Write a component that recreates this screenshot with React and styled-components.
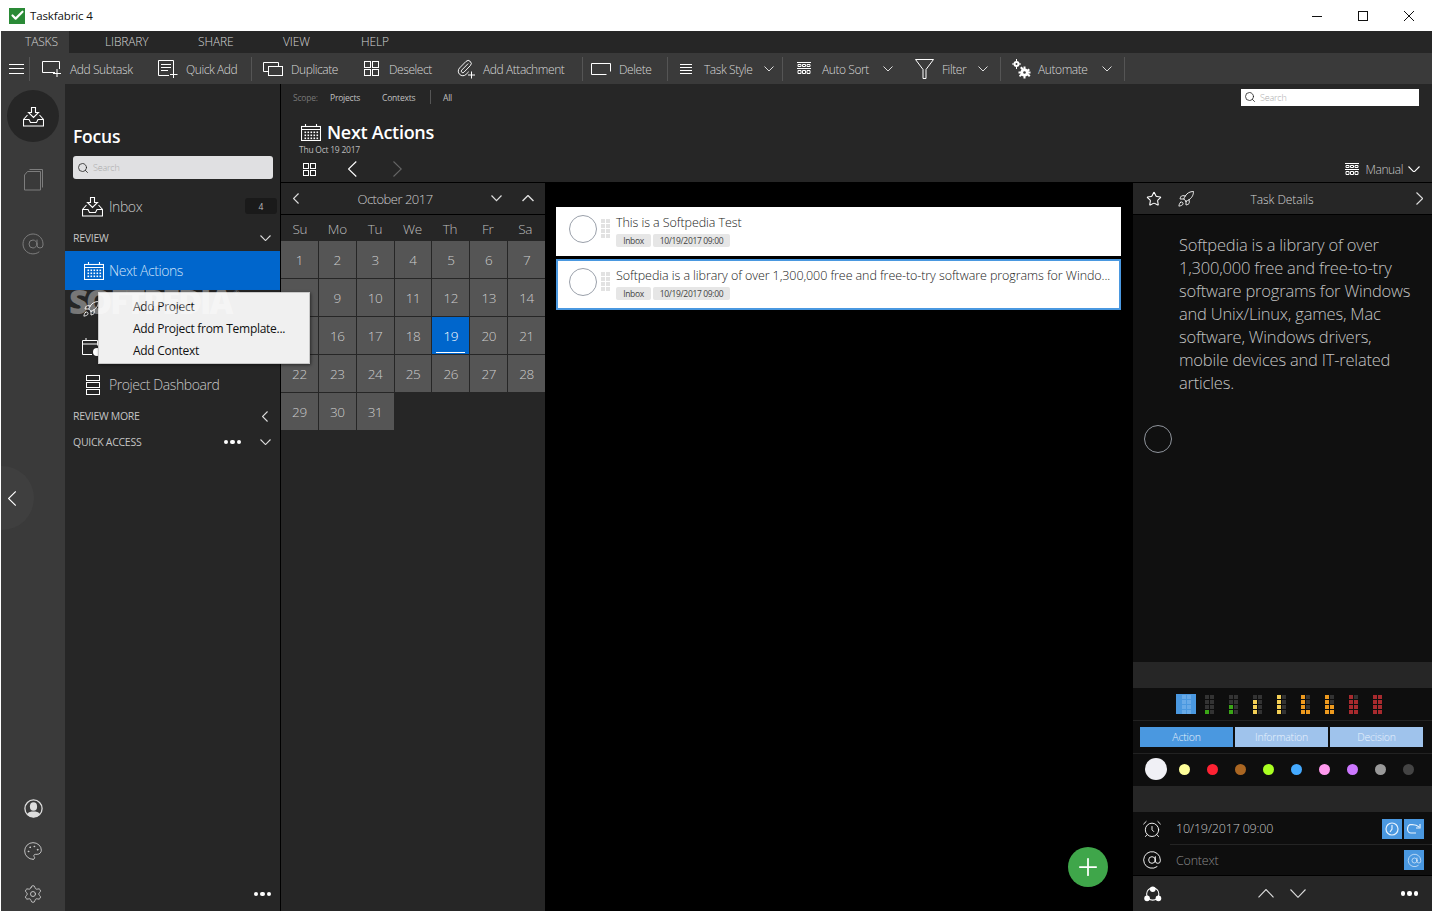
import React from 'react';
import styled, { createGlobalStyle } from 'styled-components';
import { Rocket, Star, Settings, Palette, AtSign, AlarmClock, Search as SearchIcon, Check, Plus } from 'lucide-react';

const Global = createGlobalStyle`
  html, body { margin: 0; padding: 0; background: #fff; overflow: hidden; }
  * { box-sizing: border-box; }
  body { font-family: "Open Sans", "Liberation Sans", sans-serif; }
`;

const Shell = styled.div`
  width: 1433px; height: 912px; display: flex; flex-direction: column; background: #fff; position: relative;
`;
const TitleBar = styled.div`
  height: 31px; display: flex; align-items: center; padding-left: 9px; flex: none;
`;
const Logo = styled.div`
  width: 16px; height: 16px; background: #2a8a36; display: flex; align-items: center; justify-content: center; color: #fff;
`;
const AppName = styled.span`
  margin-left: 5px; font-size: 11.5px; color: #111; letter-spacing: -0.12px;
`;
const WinButtons = styled.div`
  margin-left: auto; display: flex; margin-right: 1px;
`;
const WinButton = styled.div`
  width: 46px; height: 31px; display: flex; align-items: center; justify-content: center; color: #111;
`;
const Frame = styled.div`
  flex: 1; display: flex; flex-direction: column; margin: 0 1px 1px; min-height: 0; position: relative; background: #262626;
`;
const Tabs = styled.div`
  height: 22px; display: flex; flex: none; background: #262626;
`;
const Tab = styled.div`
  width: ${p => p.$w}px; padding-left: ${p => p.$pad}px; padding-bottom: 1px; display: flex; align-items: center;
  font-size: 12px; font-weight: 300; color: #d4d4d4; letter-spacing: -0.15px;
  background: ${p => (p.$on ? '#3a3a3a' : 'transparent')};
`;
const Toolbar = styled.div`
  height: 31px; display: flex; align-items: center; background: #3a3a3a; flex: none;
`;
const Hamburger = styled.div`
  margin-left: 8px; width: 15px; height: 10px; margin-right: 5px;
  border-top: 1px solid #fff; border-bottom: 1px solid #fff; position: relative;
  &::after { content: ''; position: absolute; left: 0; right: 0; top: 3.5px; height: 1px; background: #fff; }
`;
const ToolSep = styled.div`
  width: 1px; height: 24px; background: #555; margin-right: ${p => p.$after}px; flex: none;
`;
const ToolItem = styled.div`
  width: ${p => p.$w}px; display: flex; align-items: center; flex: none; height: 100%;
`;
const ToolIcon = styled.div`
  width: ${p => p.$w}px; display: flex; align-items: center; color: #fff; flex: none;
`;
const ToolLabel = styled.span`
  font-size: 12px; font-weight: 300; color: #d8d8d8; letter-spacing: -0.42px; white-space: nowrap; padding-top: 1px;
`;
const ToolChev = styled.div`
  margin-left: auto; margin-right: ${p => p.$r}px; display: flex; color: #ddd;
`;
const Work = styled.div`
  flex: 1; display: flex; min-height: 0; position: relative;
`;
const Rail = styled.div`
  width: 64px; flex: none; background: #3a3a3a; display: flex; flex-direction: column; position: relative;
`;
const RailSlot = styled.div`
  height: 64px; display: flex; align-items: center; justify-content: center; color: #7d7d7d;
`;
const RailActive = styled.div`
  width: 52px; height: 52px; border-radius: 50%; background: #262626; color: #fff;
  display: flex; align-items: center; justify-content: center;
`;
const RailBottom = styled.div`
  margin-top: auto; display: flex; flex-direction: column; gap: 9px;
`;
const RailFoot = styled.div`
  height: 34px; display: flex; align-items: center; justify-content: center; color: ${p => p.$c};
`;
const Collapse = styled.div`
  position: absolute; left: 0; top: 382px; width: 33px; height: 64px; background: #3f3f3f;
  border-radius: 0 33px 33px 0; display: flex; align-items: center; padding-left: 7px; color: #fff;
`;
const Sidebar = styled.div`
  width: 216px; flex: none; background: #262626; border-right: 1px solid #000;
  display: flex; flex-direction: column; padding-top: 40px;
`;
const FocusTitle = styled.div`
  height: 24px; line-height: 24px; padding-left: 8px; font-size: 17.5px; font-weight: 600; color: #fff; letter-spacing: -0.2px;
`;
const FocusSearch = styled.div`
  margin: 8px 7px 0 8px; height: 23px; background: #e0e0e2; border-radius: 3px;
  display: flex; align-items: center; padding-left: 4px; color: #222;
`;
const SearchHint = styled.span`
  margin-left: ${p => p.$gap}px; font-size: 9px; font-weight: 300; color: #aaa; letter-spacing: -0.2px;
`;
const NavRow = styled.div`
  height: ${p => p.$h}px; display: flex; align-items: center; padding-left: 17px; color: #fff;
  margin-top: ${p => p.$mt || 0}px;
  background: ${p => (p.$on ? '#0066cc' : 'transparent')};
`;
const NavIcon = styled.div`
  width: 27px; display: flex; align-items: center; flex: none; color: #fff; padding-left: ${p => p.$pl || 0}px;
`;
const NavLabel = styled.span`
  font-size: 14px; font-weight: 300; color: ${p => (p.$on ? '#cfe2f8' : '#c8c8c8')}; letter-spacing: -0.42px;
`;
const Badge = styled.div`
  margin-left: auto; margin-right: 3px; width: 32px; height: 16px; background: #1a1a1a; border-radius: 3px;
  font-size: 8.5px; color: #bbb; display: flex; align-items: center; justify-content: center;
`;
const Section = styled.div`
  height: ${p => p.$h}px; display: flex; align-items: center; padding-left: 8px; padding-right: 9px; color: #ddd;
`;
const SectionLabel = styled.span`
  font-size: 10.5px; font-weight: 400; color: #c4c4c4; letter-spacing: -0.28px; margin-right: auto;
`;
const Dots = styled.div`
  display: flex; gap: 2px; margin-right: ${p => p.$r || 0}px;
  & > i { width: 4.5px; height: 4.5px; border-radius: 50%; background: #fff; display: block; }
`;
const LeftChev = styled.div`
  display: flex; margin-right: 3px;
`;
const SideFoot = styled.div`
  margin-top: auto; height: 34px; display: flex; align-items: center; justify-content: flex-end; padding-right: 9px;
`;
const Main = styled.div`
  flex: 1; display: flex; flex-direction: column; min-width: 0;
`;
const Header = styled.div`
  height: 99px; flex: none; background: #262626; border-bottom: 1px solid #000; display: flex; flex-direction: column;
`;
const ScopeRow = styled.div`
  height: 26px; display: flex; align-items: center; padding-left: 12px; padding-right: 13px;
`;
const ScopeItem = styled.span`
  width: ${p => p.$w}px; font-size: 8.5px; letter-spacing: -0.2px; color: ${p => p.$c}; font-weight: 400; flex: none;
`;
const ScopeSep = styled.div`
  width: 1px; height: 14px; background: #555; margin-right: 12px;
`;
const TopSearch = styled.div`
  margin-left: auto; width: 178px; height: 17px; background: #fff; display: flex; align-items: center; padding-left: 3px; color: #222;
`;
const TitleRow = styled.div`
  margin-top: 11px; height: 22px; display: flex; align-items: center; padding-left: 20px; color: #fff;
`;
const PageTitle = styled.h1`
  margin: 0 0 0 6px; font-size: 18px; font-weight: 600; color: #fff; letter-spacing: -0.28px;
`;
const DateLine = styled.div`
  margin-top: 1px; height: 12px; line-height: 12px; padding-left: 18px; font-size: 8.5px; color: #bbb; letter-spacing: -0.25px;
`;
const NavBar = styled.div`
  height: 26px; display: flex; align-items: center; padding-left: 22px; padding-right: 12px; color: #fff;
`;
const NavChev = styled.div`
  margin-left: ${p => p.$ml}px; display: flex; color: ${p => p.$c};
`;
const Manual = styled.div`
  margin-left: auto; display: flex; align-items: center; color: #fff;
`;
const ManualText = styled.span`
  margin: 0 5px 0 7px; font-size: 12px; font-weight: 300; color: #c8c8c8; letter-spacing: -0.42px;
`;
const Content = styled.div`
  flex: 1; display: flex; min-height: 0;
`;
const Calendar = styled.div`
  width: 264px; flex: none; background: #262626; display: flex; flex-direction: column;
`;
const MonthBar = styled.div`
  height: 32px; flex: none; border-bottom: 1px solid #000; display: flex; align-items: center; padding-left: 12px; color: #ddd;
`;
const MonthLabel = styled.div`
  width: 180px; margin-left: 6px; text-align: center; font-size: 13px; font-weight: 300; color: #ccc; letter-spacing: -0.5px;
`;
const MonthChev = styled.div`
  margin-left: ${p => p.$ml}px; display: flex; color: #ddd;
`;
const WeekRow = styled.div`
  height: 26px; flex: none; display: grid; grid-template-columns: repeat(7, 1fr); padding: 1px 1px 0 0;
`;
const WeekDay = styled.div`
  display: flex; align-items: center; justify-content: center; font-size: 13.5px; font-weight: 300; color: #bdbdbd; letter-spacing: -0.3px;
`;
const DayGrid = styled.div`
  display: grid; grid-template-columns: repeat(7, 1fr); grid-auto-rows: 37px; gap: 1px;
`;
const Day = styled.div`
  position: relative; display: flex; align-items: center; justify-content: center;
  background: ${p => (p.$on ? '#0066cc' : '#555')}; font-size: 13.5px; font-weight: 300; color: ${p => (p.$on ? '#fff' : '#ccc')}; letter-spacing: -0.4px;
  ${p => p.$on && `&::after { content: ''; position: absolute; left: 4px; right: 4px; bottom: 1px; height: 1px; background: #fff; }`}
`;
const List = styled.div`
  flex: 1; background: #000; padding: 24px 12px 0 11px; display: flex; flex-direction: column; gap: 3px; position: relative; min-width: 0;
`;
const Card = styled.div`
  height: ${p => (p.$sel ? 51 : 49)}px; background: #fff; border: 2px solid ${p => (p.$sel ? '#4a98e0' : '#fff')};
  padding: ${p => (p.$sel ? 7 : 6)}px 6px 0 11px; display: flex; align-items: flex-start;
`;
const Check2 = styled.div`
  width: 28px; height: 28px; border-radius: 50%; border: 1px solid #9aa0aa; flex: none;
`;
const Grip = styled.div`
  display: grid; grid-template-columns: 4px 4px; grid-auto-rows: 4px; gap: 1px; margin: 4px 6px 0 4px; flex: none;
  & > i { background: #e2e2e2; display: block; }
`;
const CardBody = styled.div`
  min-width: 0; flex: 1;
`;
const CardTitle = styled.div`
  height: 16px; line-height: 16px; font-size: 12.5px; font-weight: 300; color: #222; white-space: nowrap; letter-spacing: -0.08px;
`;
const TagRow = styled.div`
  margin-top: 3px; display: flex; gap: 2px;
`;
const Tag = styled.span`
  width: ${p => p.$w}px; height: 13px; line-height: 13px; background: #e6e6e6; border-radius: 2px; text-align: center;
  font-size: 8.5px; color: #444; letter-spacing: -0.35px;
`;
const Fab = styled.div`
  position: absolute; left: 523px; top: 664px; width: 40px; height: 40px; border-radius: 50%; background: #3fa64a;
  display: flex; align-items: center; justify-content: center; color: #fff;
`;
const Detail = styled.div`
  width: 299px; flex: none; display: flex; flex-direction: column; background: #0e0e0e;
`;
const DetailHead = styled.div`
  height: 32px; flex: none; background: #262626; border-bottom: 1px solid #000; display: flex; align-items: center;
  padding: 0 8px 0 13px; color: #fff;
`;
const DetailTitle = styled.div`
  width: 140px; margin-left: 17px; text-align: center; font-size: 12px; font-weight: 300; color: #d4d4d4; letter-spacing: -0.05px; padding-top: 1px;
`;
const DetailBody = styled.div`
  height: 447px; flex: none; background: #101010; padding: 18px 10px 0 11px;
`;
const Note = styled.p`
  margin: 0 0 0 35px; width: 240px; font-size: 16.5px; line-height: 23px; font-weight: 300; color: #c4c4c4; letter-spacing: -0.2px;
`;
const BigCircle = styled.div`
  margin-top: 31px; width: 28px; height: 28px; border-radius: 50%; border: 1px solid #8f949c;
`;
const Band = styled.div`
  height: 26px; flex: none; background: #262626;
`;
const Strip = styled.div`
  height: 32px; flex: none; display: flex; align-items: center; padding-left: ${p => p.$pl}px; padding-bottom: ${p => p.$pb || 0}px; gap: ${p => p.$gap || 0}px;
  border-bottom: ${p => (p.$line ? '1px solid #222' : 'none')}; box-sizing: ${p => (p.$line ? 'content-box' : 'border-box')};
`;
const PriorityOn = styled.div`
  width: 20px; height: 20px; background: #4a98e0; display: grid; grid-template-columns: 4px 4px; grid-auto-rows: 4px; gap: 1px;
  justify-content: center; align-content: center; margin-right: -6px;
  & > i { background: #68aae8; display: block; }
`;
const Priority = styled.div`
  display: grid; grid-template-columns: 4px 4px; grid-auto-rows: 4px; gap: 1px;
`;
const Pip = styled.i`
  display: block; background: ${p => p.$c};
`;
const TypeButton = styled.div`
  width: 93px; height: 20px; background: ${p => (p.$on ? '#4a98e0' : '#9fc3ec')}; display: flex; align-items: center; justify-content: center;
  font-size: 10.5px; font-weight: 300; color: #e8f2fc; letter-spacing: -0.2px;
`;
const DotSlot = styled.div`
  width: 28px; display: flex; justify-content: center; flex: none;
`;
const ColorDot = styled.div`
  width: ${p => (p.$big ? 22 : 11)}px; height: ${p => (p.$big ? 22 : 11)}px; border-radius: 50%; background: ${p => p.$c};
`;
const MetaRow = styled.div`
  height: ${p => p.$h}px; flex: none; position: relative; display: flex; align-items: center; padding: 0 8px 0 9px; color: #fff;
  ${p => p.$line && `&::after { content: ''; position: absolute; left: 37px; right: 0; bottom: 0; height: 1px; background: #242424; }`}
`;
const MetaIcon = styled.div`
  width: 20px; display: flex; justify-content: center; flex: none;
`;
const MetaText = styled.span`
  margin-left: 14px; margin-right: auto; font-size: 12.5px; font-weight: 300; color: ${p => p.$c}; letter-spacing: -0.2px; padding-top: ${p => p.$pt || 0}px;
`;
const MetaButton = styled.div`
  width: 20px; height: 20px; background: #4a98e0; margin-left: 2px; display: flex; align-items: center; justify-content: center; color: #e6f1fc;
`;
const DetailFoot = styled.div`
  flex: 1; background: #262626; border-top: 1px solid #000; display: flex; align-items: center; padding: 0 14px 0 11px; color: #fff;
`;
const FootChev = styled.div`
  margin-left: ${p => p.$ml}px; display: flex; color: #ddd;
`;
const Popup = styled.div`
  position: absolute; left: 97px; top: 208px; width: 212px; height: 72px; background: #f0f0f0; border: 1px solid #c8c8c8;
  box-shadow: 1px 1px 3px rgba(0,0,0,0.5); padding-top: 3px; z-index: 3;
`;
const PopItem = styled.div`
  height: 22px; line-height: 22px; padding-left: 34px; font-size: 12px; color: #111; letter-spacing: -0.28px; white-space: nowrap;
`;
const Watermark = styled.div`
  position: absolute; left: 68px; top: 200px; font-size: 33px; line-height: 36px; font-weight: 800; color: rgba(255,255,255,0.38); z-index: 4; letter-spacing: -2.1px; pointer-events: none; white-space: nowrap;
  & > sup { font-size: 8px; font-weight: 400; letter-spacing: 0; vertical-align: 18px; line-height: 0; margin-left: 2px; }
`;

const Svg = ({ w, h, sw = 1, children, fill = 'none' }) => (
  <svg width={w} height={h} viewBox={`0 0 ${w} ${h}`} fill={fill} stroke="currentColor" strokeWidth={sw} style={{ display: 'block' }}>{children}</svg>
);
const Chev = ({ dir = 'down', w = 12, sw = 1.2 }) => {
  const s = 0.55 * w;
  const pts = {
    down: [w, s, `M.5 .5L${w / 2} ${s - 0.5}L${w - 0.5} .5`],
    up: [w, s, `M.5 ${s - 0.5}L${w / 2} .5L${w - 0.5} ${s - 0.5}`],
    left: [s, w, `M${s - 0.5} .5L.5 ${w / 2}L${s - 0.5} ${w - 0.5}`],
    right: [s, w, `M.5 .5L${s - 0.5} ${w / 2}L.5 ${w - 0.5}`],
  }[dir];
  return <Svg w={pts[0]} h={pts[1]} sw={sw}><path d={pts[2]} /></Svg>;
};
const InboxIco = ({ s = 21 }) => (
  <svg width={s} height={s} viewBox="0 0 21 21" fill="none" stroke="currentColor" strokeWidth="1.1" style={{ display: 'block' }}>
    <path d="M8.5 1.5h4v5h3l-5 5-5-5h3z" /><path d="M4.5 9L.5 13.5v6.5h20v-6.5L16.5 9M.5 13.5h5.5l1.5 3h6l1.5-3h5.5" />
  </svg>
);
const CalIco = ({ w = 20, h = 18 }) => (
  <Svg w={w} h={h} sw={1.1}>
    <rect x=".5" y="2.5" width={w - 1} height={h - 3} /><path d={`M4.5 0v3M${w - 4.5} 0v3M.5 5.5H${w - .5}`} />
    {[7.5, 10.5, 13.5].map(y => [3.5, 6.5, 9.5, 12.5, 15.5].map(x => <rect key={x + '-' + y} x={x} y={y} width="1.6" height="1.6" fill="currentColor" stroke="none" />))}
  </Svg>
);
const GridIco = ({ s = 14 }) => (
  <Svg w={s} h={s}>
    <rect x=".5" y=".5" width={s / 2 - 1.5} height={s / 2 - 1.5} /><rect x={s / 2 + 1} y=".5" width={s / 2 - 1.5} height={s / 2 - 1.5} />
    <rect x=".5" y={s / 2 + 1} width={s / 2 - 1.5} height={s / 2 - 1.5} /><rect x={s / 2 + 1} y={s / 2 + 1} width={s / 2 - 1.5} height={s / 2 - 1.5} />
  </Svg>
);
const SortIco = () => (
  <Svg w={14} h={13}>
    <path d="M0 .5h14M0 6.5h14" /><path d="M1 2.5h3v2H1zM5.5 2.5h3v2h-3zM10 2.5h3v2h-3zM1 8.5h3v3H1zM5.5 8.5h3v3h-3zM10 8.5h3v3h-3z" />
  </Svg>
);
const ClipIco = () => (
  <svg width="20" height="20" viewBox="0 0 20 20" fill="none" stroke="currentColor" style={{ display: 'block' }}>
    <g transform="scale(0.76)" strokeWidth="1.25">
      <path d="m16 6-8.414 8.586a2 2 0 0 0 2.829 2.829l8.414-8.586a4 4 0 1 0-5.657-5.657l-8.379 8.551a6 6 0 1 0 8.485 8.485l3.5-3.5" />
    </g>
    <path d="M15.500 12.500v7M12 16h7" />
  </svg>
);
const GearsIco = () => (
  <svg width="19" height="20" viewBox="0 0 19 20" style={{ display: 'block' }} fill="#fff">
    <circle cx="4.500" cy="5" r="3" /><circle cx="4.500" cy="5" r="1" fill="#3a3a3a" />
    <path d="M4 0h1v2H4zM4 8h1v2H4zM0 4.500h2v1H0zM7 4.500h2v1H7z" />
    <circle cx="12.500" cy="13.500" r="4" /><circle cx="12.500" cy="13.500" r="1.300" fill="#3a3a3a" />
    <path d="M11.500 7.500h2V10h-2zM11.500 17h2v2.500h-2zM6.500 12.500H9v2H6.500zM16 12.500h2.500v2H16z" />
    <path d="M8 9l1.500-1.500 2 2-1.500 1.500zM15 16l1.500-1.500 2 2L17 18zM8 18l-1-1.500 2-2 1.500 1.500zM15 11l1.500-1.500L18 11l-2 2z" />
  </svg>
);
const ShareIco = () => (
  <svg width="20" height="18" viewBox="0 0 20 18" fill="none" stroke="#fff" style={{ display: 'block' }}>
    <circle cx="10" cy="9" r="7" strokeWidth="1.2" />
    <circle cx="10" cy="3.500" r="3.200" fill="#fff" stroke="none" /><circle cx="3.500" cy="14" r="3.200" fill="#fff" stroke="none" /><circle cx="16.500" cy="14" r="3.200" fill="#fff" stroke="none" />
  </svg>
);
const UserIco = () => (
  <svg width="19" height="19" viewBox="0 0 19 19" style={{ display: 'block' }}>
    <circle cx="9.500" cy="9.500" r="8.600" fill="none" stroke="#ddd" strokeWidth="1.3" />
    <ellipse cx="9.500" cy="7.500" rx="3.600" ry="4.300" fill="#ddd" /><path d="M3 15.500c1.500-3 4-3 6.500-3s5 0 6.500 3c-3.500 3.500-9.500 3.500-13 0z" fill="#ddd" />
  </svg>
);
const Pips = ({ on = [], c }) => (
  <Priority>
    {Array.from({ length: 8 }, (_, i) => <Pip key={i} $c={on.includes(i) ? c : '#333'} />)}
  </Priority>
);

const tools = [
  { w: 116, iw: 28, label: 'Add Subtask', icon: <Svg w={20} h={17}><path d="M13 12.500H.5V1.500h17V9" /><path d="M15 9v8M11 13.500h8" /></Svg> },
  { w: 93, iw: 28, label: 'Quick Add', icon: <Svg w={20} h={18}><path d="M11 15.500H.5V.5h15V11" /><path d="M3 4.500h10M3 7.500h10M3 10.500h7M15.500 11v7M12 14.500h7.500" /></Svg>, sep: 11 },
  { w: 101, iw: 28, label: 'Duplicate', icon: <Svg w={20} h={16}><path d="M5.500 10.500H.5V1.500h15V5" /><rect x="5.500" y="5.500" width="14" height="9" /></Svg> },
  { w: 92, iw: 25, label: 'Deselect', icon: <GridIco s={15} /> },
  { w: 126, iw: 27, label: 'Add Attachment', icon: <ClipIco />, sep: 8 },
  { w: 76, iw: 28, label: 'Delete', icon: <Svg w={20} h={12}><path d="M15.500 11.500H.5V.5h19v8" /></Svg>, sep: 12 },
  { w: 102, iw: 24, label: 'Task Style', chev: 8, icon: <Svg w={12} h={10}><path d="M0 .5h12M0 3.500h12M0 6.500h12M0 9.500h12" /></Svg>, sep: 14 },
  { w: 118, iw: 25, label: 'Auto Sort', chev: 22, icon: <SortIco /> },
  { w: 85, iw: 27, label: 'Filter', chev: 12, icon: <Svg w={19} h={20}><path d="M.5 .5h18L11 10.500V19.500H8V10.500z" /></Svg>, sep: 11 },
  { w: 112, iw: 26, label: 'Automate', chev: 12, icon: <GearsIco />, sep: 0 },
];
const weekdays = ['Su', 'Mo', 'Tu', 'We', 'Th', 'Fr', 'Sa'];
const days = Array.from({ length: 31 }, (_, i) => i + 1);
const levels = [
  { on: [6], c: '#3aa616' }, { on: [4, 6], c: '#3aa616' }, { on: [2, 4, 6], c: '#f3cf55' }, { on: [0, 2, 4, 6], c: '#f3cf55' },
  { on: [0, 2, 4, 6, 7], c: '#ee9a1e' }, { on: [0, 2, 4, 5, 6, 7], c: '#ee9a1e' }, { on: [0, 2, 3, 4, 5, 6, 7], c: '#a82a2e' }, { on: [0, 1, 2, 3, 4, 5, 6, 7], c: '#a82a2e' },
];
const colors = ['#ffff99', '#ff2233', '#aa6622', '#aaff22', '#44aaff', '#ff99ee', '#cc77ff', '#999999', '#444444'];
const eight = Array.from({ length: 8 }, (_, i) => <i key={i} />);
const Three = ({ r }) => <Dots $r={r}><i /><i /><i /></Dots>;

export default function App() {
  return (
    <Shell>
      <Global />
      <TitleBar>
        <Logo><Check size={15} strokeWidth={3.5} /></Logo>
        <AppName>Taskfabric 4</AppName>
        <WinButtons>
          <WinButton><Svg w={10} h={10}><path d="M0 5.500h10" /></Svg></WinButton>
          <WinButton><Svg w={10} h={10}><rect x=".5" y=".5" width="9" height="9" /></Svg></WinButton>
          <WinButton><Svg w={10} h={10}><path d="M0 0l10 10M10 0L0 10" /></Svg></WinButton>
        </WinButtons>
      </TitleBar>
      <Frame>
        <Tabs>
          <Tab $w={68} $pad={24} $on>TASKS</Tab>
          <Tab $w={93} $pad={36}>LIBRARY</Tab>
          <Tab $w={85} $pad={36}>SHARE</Tab>
          <Tab $w={78} $pad={36}>VIEW</Tab>
          <Tab $w={80} $pad={36}>HELP</Tab>
        </Tabs>
        <Toolbar>
          <Hamburger />
          <ToolSep $after={12} />
          {tools.map(t => (
            <React.Fragment key={t.label}>
              <ToolItem $w={t.w}>
                <ToolIcon $w={t.iw}>{t.icon}</ToolIcon>
                <ToolLabel>{t.label}</ToolLabel>
                {t.chev !== undefined && <ToolChev $r={t.chev}><Chev w={10} sw={1} /></ToolChev>}
              </ToolItem>
              {t.sep !== undefined && <ToolSep $after={t.sep} />}
            </React.Fragment>
          ))}
        </Toolbar>
        <Work>
          <Rail>
            <RailSlot><RailActive><InboxIco /></RailActive></RailSlot>
            <RailSlot>
              <Svg w={19} h={22}><path d="M5.500 .5H18.500V18.500M3.500 2.500h13v18.500H.5V6z" /></Svg>
            </RailSlot>
            <RailSlot><AtSign size={24} strokeWidth={1} /></RailSlot>
            <Collapse><Chev dir="left" w={15} sw={1.1} /></Collapse>
            <RailBottom>
              <RailFoot $c="#ddd"><UserIco /></RailFoot>
              <RailFoot $c="#ccc"><Palette size={20} strokeWidth={1.1} /></RailFoot>
              <RailFoot $c="#ccc"><Settings size={20} strokeWidth={1.1} /></RailFoot>
            </RailBottom>
          </Rail>
          <Sidebar>
            <FocusTitle>Focus</FocusTitle>
            <FocusSearch><SearchIcon size={12} strokeWidth={1.6} /><SearchHint $gap={4}>Search</SearchHint></FocusSearch>
            <NavRow $h={38} $mt={8}>
              <NavIcon><InboxIco /></NavIcon>
              <NavLabel>Inbox</NavLabel>
              <Badge>4</Badge>
            </NavRow>
            <Section $h={26}><SectionLabel>REVIEW</SectionLabel><Chev w={11} sw={1.1} /></Section>
            <NavRow $h={39} $on>
              <NavIcon $pl={2}><CalIco /></NavIcon>
              <NavLabel $on>Next Actions</NavLabel>
            </NavRow>
            <NavRow $h={38}><NavIcon><Rocket size={18} strokeWidth={1.2} /></NavIcon></NavRow>
            <NavRow $h={38}>
              <NavIcon>
                <Svg w={19} h={18}><path d="M10 16.500H.5V2.500h15v5M.5 6h15M4 0v3" /><circle cx="15" cy="14" r="4" fill="#fff" stroke="none" /></Svg>
              </NavIcon>
            </NavRow>
            <NavRow $h={37}>
              <NavIcon $pl={4}>
                <Svg w={14} h={20}><rect x=".5" y=".5" width="13" height="5" /><rect x=".5" y="7.500" width="13" height="5" /><rect x=".5" y="14.500" width="13" height="5" /></Svg>
              </NavIcon>
              <NavLabel>Project Dashboard</NavLabel>
            </NavRow>
            <Section $h={26}><SectionLabel>REVIEW MORE</SectionLabel><LeftChev><Chev dir="left" w={11} sw={1.1} /></LeftChev></Section>
            <Section $h={26}><SectionLabel>QUICK ACCESS</SectionLabel><Three r={19} /><Chev w={11} sw={1.1} /></Section>
            <SideFoot><Three /></SideFoot>
          </Sidebar>
          <Main>
            <Header>
              <ScopeRow>
                <ScopeItem $w={37} $c="#777">Scope:</ScopeItem>
                <ScopeItem $w={52} $c="#c0c0c0">Projects</ScopeItem>
                <ScopeItem $w={48} $c="#c0c0c0">Contexts</ScopeItem>
                <ScopeSep />
                <ScopeItem $w={20} $c="#c0c0c0">All</ScopeItem>
                <TopSearch><SearchIcon size={12} strokeWidth={1.6} /><SearchHint $gap={4}>Search</SearchHint></TopSearch>
              </ScopeRow>
              <TitleRow><CalIco w={20} h={17} /><PageTitle>Next Actions</PageTitle></TitleRow>
              <DateLine>Thu Oct 19 2017</DateLine>
              <NavBar>
                <GridIco s={13} />
                <NavChev $ml={32} $c="#fff"><Chev dir="left" w={16} sw={1.1} /></NavChev>
                <NavChev $ml={36} $c="#666"><Chev dir="right" w={16} sw={1.1} /></NavChev>
                <Manual><SortIco /><ManualText>Manual</ManualText><Chev w={12} sw={1.1} /></Manual>
              </NavBar>
            </Header>
            <Content>
              <Calendar>
                <MonthBar>
                  <Chev dir="left" w={11} sw={1.2} />
                  <MonthLabel>October 2017</MonthLabel>
                  <MonthChev $ml={6}><Chev w={11} sw={1.2} /></MonthChev>
                  <MonthChev $ml={20}><Chev dir="up" w={12} sw={1.4} /></MonthChev>
                </MonthBar>
                <WeekRow>{weekdays.map(d => <WeekDay key={d}>{d}</WeekDay>)}</WeekRow>
                <DayGrid>{days.map(d => <Day key={d} $on={d === 19}>{d}</Day>)}</DayGrid>
              </Calendar>
              <List>
                <Card>
                  <Check2 />
                  <Grip>{eight}</Grip>
                  <CardBody>
                    <CardTitle>This is a Softpedia Test</CardTitle>
                    <TagRow><Tag $w={35}>Inbox</Tag><Tag $w={77}>10/19/2017 09:00</Tag></TagRow>
                  </CardBody>
                </Card>
                <Card $sel>
                  <Check2 />
                  <Grip>{eight}</Grip>
                  <CardBody>
                    <CardTitle>Softpedia is a library of over 1,300,000 free and free-to-try software programs for Windo...</CardTitle>
                    <TagRow><Tag $w={35}>Inbox</Tag><Tag $w={77}>10/19/2017 09:00</Tag></TagRow>
                  </CardBody>
                </Card>
                <Fab><Plus size={28} strokeWidth={1.5} /></Fab>
              </List>
              <Detail>
                <DetailHead>
                  <Star size={16} strokeWidth={1.6} />
                  <NavChev $ml={15} $c="#fff"><Rocket size={18} strokeWidth={1.2} /></NavChev>
                  <DetailTitle>Task Details</DetailTitle>
                  <NavChev $ml={64} $c="#ddd"><Chev dir="right" w={13} sw={1.1} /></NavChev>
                </DetailHead>
                <DetailBody>
                  <Note>Softpedia is a library of over 1,300,000 free and free-to-try software programs for Windows and Unix/Linux, games, Mac software, Windows drivers, mobile devices and IT-related articles.</Note>
                  <BigCircle />
                </DetailBody>
                <Band />
                <Strip $pl={43} $gap={15} $line>
                  <PriorityOn>{eight}</PriorityOn>
                  {levels.map((l, i) => <Pips key={i} on={l.on} c={l.c} />)}
                </Strip>
                <Strip $pl={7} $gap={2} $line>
                  <TypeButton $on>Action</TypeButton>
                  <TypeButton>Information</TypeButton>
                  <TypeButton>Decision</TypeButton>
                </Strip>
                <Strip $pl={9} $pb={2}>
                  <DotSlot><ColorDot $big $c="#f0f0f5" /></DotSlot>
                  {colors.map(c => <DotSlot key={c}><ColorDot $c={c} /></DotSlot>)}
                </Strip>
                <Band />
                <MetaRow $h={33} $line>
                  <MetaIcon><AlarmClock size={22} strokeWidth={1.1} /></MetaIcon>
                  <MetaText $c="#c4c4c4">10/19/2017 09:00</MetaText>
                  <MetaButton><Svg w={14} h={14} sw={1.2}><circle cx="7" cy="7" r="6" /><path d="M7 3v4l-2 3" /></Svg></MetaButton>
                  <MetaButton><Svg w={14} h={10} sw={1.2}><path d="M12 3C9 .5 5 .5 3 .5 1 1.500.5 3 .5 5c0 2 1.500 4 3.500 4h5" /><path d="M13 0v4H9" /></Svg></MetaButton>
                </MetaRow>
                <MetaRow $h={30}>
                  <MetaIcon><AtSign size={24} strokeWidth={1.1} /></MetaIcon>
                  <MetaText $c="#8a8a8a" $pt={1}>Context</MetaText>
                  <MetaButton><AtSign size={15} strokeWidth={1.1} /></MetaButton>
                </MetaRow>
                <DetailFoot>
                  <ShareIco />
                  <FootChev $ml={96}><Chev dir="up" w={16} sw={1.1} /></FootChev>
                  <FootChev $ml={16}><Chev w={16} sw={1.1} /></FootChev>
                  <NavChev $ml={95} $c="#fff"><Three /></NavChev>
                </DetailFoot>
              </Detail>
            </Content>
          </Main>
          <Watermark>SOFTPEDIA<sup>®</sup></Watermark>
          <Popup>
            <PopItem>Add Project</PopItem>
            <PopItem>Add Project from Template...</PopItem>
            <PopItem>Add Context</PopItem>
          </Popup>
        </Work>
      </Frame>
    </Shell>
  );
}
